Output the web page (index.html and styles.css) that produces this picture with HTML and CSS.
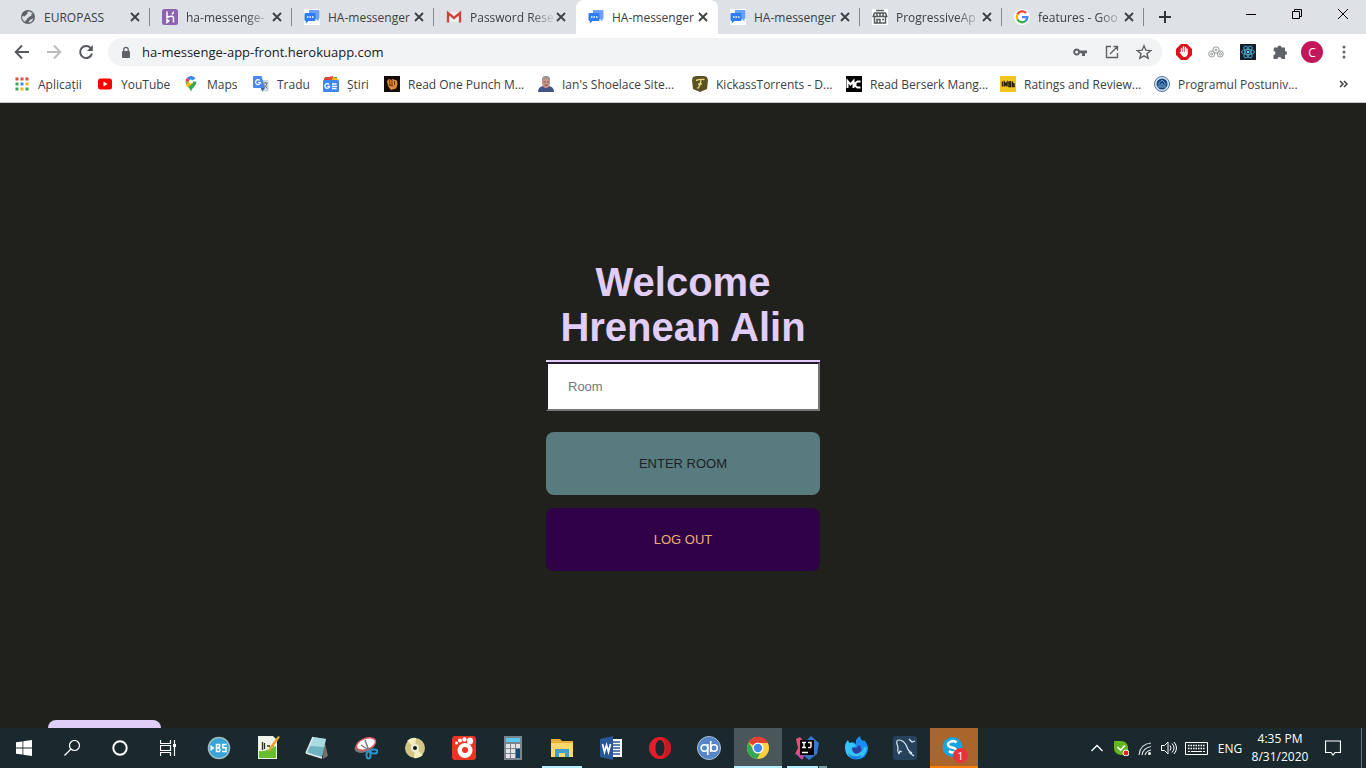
FILE: index.html
```html
<!DOCTYPE html>
<html lang="en">
<head>
<meta charset="utf-8">
<meta name="viewport" content="width=device-width, initial-scale=1">
<title>HA-messenger</title>
<link rel="stylesheet" href="styles.css">
</head>
<body>
<svg class="symbols" aria-hidden="true">
  <symbol id="close" viewBox="0 0 10 10"><path d="M1 1l8 8M9 1L1 9" stroke="#3c4043" stroke-width="1.8" fill="none"/></symbol>
  <symbol id="chat" viewBox="0 0 16 16"><path d="M5 1h9.500q1 0 1 1v7q0 1-1 1v2.500L12 10H5z" fill="#6ba1fb"/><path d="M1.500 4h9q1 0 1 1v6q0 1-1 1H4.500L1.800 14.500V12q-1.300 0-1.300-1V5q0-1 1-1z" fill="#2f7df6"/><path d="M3 8h1.500M5.500 8H7M8 8h1.500" stroke="#fff" stroke-width="1.400"/></symbol>
</svg>

<header class="browser">
  <nav class="tabs" aria-label="Tabs">
    <div class="tab">
      <svg class="icon" viewBox="0 0 16 16"><circle cx="8" cy="8" r="7" fill="#5f6368"/><path d="M8.500 2.500C7 3 8 5 6.500 5.500S6 7 4.500 7.500L2.300 7c-.5 2 .5 4.500 2.700 5.800.2-1.800 2-1.300 2.200-3C7.500 8.500 9 9 9.500 7.500l2-.8-.5-1.500 1.800-.2c-1-1.600-2.500-2.500-4.300-2.500z" fill="#dee1e6"/><path d="M8.500 13.500c0-2 1.500-1.500 2-3l2.800-1c-.5 2-2 4-4.800 4z" fill="#dee1e6"/></svg>
      <span class="tab-title">EUROPASS</span><button class="tab-close" aria-label="Close"><svg><use href="#close"/></svg></button>
    </div>
    <div class="tab">
      <svg class="icon" viewBox="0 0 16 16"><rect width="16" height="16" rx="2.500" fill="#8d63b0"/><path d="M5 2.500V8.500q3-1.300 5-1.200 1.500.2 1.500 2v4.200M11.500 2.500q-.2 1.800-1.500 2.800M5 10.500v3l1.800-1.500z" stroke="#fff" stroke-width="1.500" fill="none"/></svg>
      <span class="tab-title fade">ha-messenge-</span><button class="tab-close" aria-label="Close"><svg><use href="#close"/></svg></button>
    </div>
    <div class="tab">
      <svg class="icon plate"><use href="#chat"/></svg>
      <span class="tab-title">HA-messenger</span><button class="tab-close" aria-label="Close"><svg><use href="#close"/></svg></button>
    </div>
    <div class="tab before-active">
      <svg class="icon" viewBox="0 0 16 16"><path d="M2 13V3h12v10z" fill="#eee"/><path d="M2 13.500V4l6 5 6-5v9.500" stroke="#d0453a" stroke-width="2.300" fill="none"/></svg>
      <span class="tab-title fade">Password Rese</span><button class="tab-close" aria-label="Close"><svg><use href="#close"/></svg></button>
    </div>
    <div class="tab active">
      <svg class="icon"><use href="#chat"/></svg>
      <span class="tab-title">HA-messenger</span><button class="tab-close" aria-label="Close"><svg><use href="#close"/></svg></button>
    </div>
    <div class="tab">
      <svg class="icon plate"><use href="#chat"/></svg>
      <span class="tab-title">HA-messenger</span><button class="tab-close" aria-label="Close"><svg><use href="#close"/></svg></button>
    </div>
    <div class="tab">
      <svg class="icon plate" viewBox="0 0 16 16"><path d="M4 1.500h8M2.500 4h11l1.300 3.500H1.200zM2.500 8v6h11V8M5 4v3.500M8 4v4M11 4v3.500M5 14v-3.500h3V14M10 10.500h2" stroke="#555a5e" stroke-width="1.500" fill="none"/></svg>
      <span class="tab-title fade">ProgressiveAp</span><button class="tab-close" aria-label="Close"><svg><use href="#close"/></svg></button>
    </div>
    <div class="tab">
      <svg class="icon plate round" viewBox="0 0 16 16"><g fill="none" stroke-width="2.300"><path d="M12 4A5.200 5.200 0 0 0 3.500 5.500" stroke="#ea4335"/><path d="M3.500 5.500a5.200 5.200 0 0 0 0 5" stroke="#fbbc05"/><path d="M3.500 10.500A5.200 5.200 0 0 0 11.500 12" stroke="#34a853"/><path d="M11.500 12q1.800-1.500 1.800-3.800H8" stroke="#4285f4"/></g></svg>
      <span class="tab-title fade">features - Goo</span><button class="tab-close" aria-label="Close"><svg><use href="#close"/></svg></button>
    </div>
    <button class="new-tab" aria-label="New tab"><svg viewBox="0 0 12 12"><path d="M6 0v12M0 6h12" stroke="#333639" stroke-width="2"/></svg></button>
    <div class="window-controls">
      <button aria-label="Minimize"><svg viewBox="0 0 12 12"><path d="M1 6.500h10" stroke="#000"/></svg></button>
      <button aria-label="Restore"><svg viewBox="0 0 12 12"><path d="M1.500 3.500h7v7h-7zM3.500 3.500v-2h7v7h-2" stroke="#000" fill="none"/></svg></button>
      <button aria-label="Close window"><svg viewBox="0 0 12 12"><path d="M1 1l10 10M11 1L1 11" stroke="#000"/></svg></button>
    </div>
  </nav>

  <div class="toolbar">
    <div class="nav-buttons">
      <button aria-label="Back"><svg viewBox="0 0 16 16"><path d="M15 8H2M8 1.500L1.700 8 8 14.500" stroke="#55595e" stroke-width="1.900" fill="none"/></svg></button>
      <button aria-label="Forward"><svg viewBox="0 0 16 16"><path d="M1 8h13M8 1.500L14.300 8 8 14.500" stroke="#babcbe" stroke-width="1.900" fill="none"/></svg></button>
      <button aria-label="Reload"><svg viewBox="0 0 16 16"><path d="M13 4.500A6 6 0 1 0 14 9.500" stroke="#55595e" stroke-width="2" fill="none"/><path d="M14.800 1v6H9z" fill="#55595e"/></svg></button>
    </div>
    <div class="omnibox">
      <svg class="lock" viewBox="0 0 10 13"><rect x="1" y="5" width="8" height="7" rx="1" fill="#5f6368"/><path d="M2.800 6V3.500a2.200 2.200 0 0 1 4.400 0V6" stroke="#5f6368" stroke-width="1.300" fill="none"/></svg>
      <input class="address" type="text" aria-label="Address" value="ha-messenge-app-front.herokuapp.com">
      <div class="omnibox-actions">
        <svg viewBox="0 0 16 16"><path d="M4.700 4.500a3.500 3.500 0 1 0 3.300 4.800h2V12h3V9.300h2V6.500H8a3.500 3.500 0 0 0-3.300-2zm0 2a1.500 1.500 0 1 1 0 3 1.500 1.500 0 0 1 0-3z" fill="#5f6368"/></svg>
        <svg viewBox="0 0 16 16"><path d="M7 2.500H2.500v11h11V9M9.500 2.500h4v4M13.500 2.500l-7.500 7.500" stroke="#5f6368" stroke-width="1.400" fill="none"/></svg>
        <svg viewBox="0 0 16 16"><path d="M8 1.800l1.900 4.400 4.800.4L11 9.700l1.200 4.700L8 11.900l-4.200 2.500L5 9.700 1.300 6.600l4.800-.4z" stroke="#5f6368" stroke-width="1.400" fill="none"/></svg>
      </div>
    </div>
    <div class="extensions">
      <svg viewBox="0 0 16 16"><path d="M5 0h6l5 5v6l-5 5H5l-5-5V5z" fill="#d9141c"/><path d="M5.500 9V4.500M7.500 8V3M9.500 8V3.500M11 9V5" stroke="#fff" stroke-width="1.400" stroke-linecap="round"/><path d="M5 8h6.700v2q-.5 3-3 3-1.700 0-2.700-1.500L3.500 8.300q.5-1 1.500 0z" fill="#fff"/></svg>
      <svg viewBox="0 0 16 16"><g stroke="#999c9f" fill="none"><circle cx="8" cy="6" r="3.200"/><circle cx="3.700" cy="10" r="3"/><circle cx="12.300" cy="10" r="3"/><circle cx="8" cy="6" r="1"/><circle cx="12.300" cy="10" r="1.200"/><circle cx="3.700" cy="10" r="1"/></g></svg>
      <svg viewBox="0 0 16 16"><path d="M0 0h16v16H0z" fill="#17212d"/><g fill="none" stroke="#4aa6c4"><ellipse cx="8" cy="8" rx="6.500" ry="2.500"/><ellipse cx="8" cy="8" rx="6.500" ry="2.500" transform="rotate(60 8 8)"/><ellipse cx="8" cy="8" rx="6.500" ry="2.500" transform="rotate(120 8 8)"/></g><circle cx="8" cy="8" r="1.300" fill="#61dafb"/></svg>
      <svg viewBox="0 0 16 16"><path d="M2 3.500h3.500a2 2 0 1 1 4 0H13V7a2 2 0 1 1 0 4v4H9.500a2 2 0 1 0-4 0H1.500v-4a2 2 0 1 0 0-4z" fill="#5f6368"/></svg>
    </div>
    <button class="profile" aria-label="Profile">C</button>
    <button class="menu" aria-label="Menu"><svg viewBox="0 0 4 14"><g fill="#5f6368"><circle cx="2" cy="2" r="1.500"/><circle cx="2" cy="7" r="1.500"/><circle cx="2" cy="12" r="1.500"/></g></svg></button>
  </div>

  <nav class="bookmarks" aria-label="Bookmarks">
    <a href="#"><svg class="icon" viewBox="0 0 16 16"><path d="M1.500 3H15" stroke="#df4a40" stroke-width="3" stroke-dasharray="3 2"/><path d="M1.500 8h3M11.500 13h3" stroke="#34a853" stroke-width="3"/><path d="M6.500 8h3" stroke="#4285f4" stroke-width="3"/><path d="M11.500 8h3M6.500 13h3" stroke="#f3b51b" stroke-width="3"/><path d="M1.500 13h3" stroke="#34a853" stroke-width="3"/></svg><span>Aplicații</span></a>
    <a href="#"><svg class="icon" viewBox="0 0 16 16"><rect x="1" y="2.500" width="14" height="11" rx="2.500" fill="#f00"/><path d="M6.500 5.500v5L10.500 8z" fill="#fff"/></svg><span>YouTube</span></a>
    <a href="#"><svg class="icon" viewBox="0 0 16 16"><path d="M8 16C7.500 12 2.500 10 2.500 5.500h11C13.500 10 8.500 12 8 16z" fill="#34a853"/><path d="M2.500 5.500A5.500 5.500 0 0 1 4 1.800L8 5.500z" fill="#ea4335"/><path d="M4 1.800a5.500 5.500 0 0 1 8.500.5L8 6z" fill="#4285f4"/><path d="M3 8L7 4l3 3-5 4.500Q3.500 10 3 8z" fill="#fbbc05"/><circle cx="8" cy="5.500" r="2" fill="#fff"/></svg><span>Maps</span></a>
    <a href="#"><svg class="icon" viewBox="0 0 16 16"><path d="M6 4h9.500v11.500H9z" fill="#d5d8dc"/><path d="M1 0h7.500l3.500 12H1q-1 0-1-1V1q0-1 1-1z" fill="#4a88ec"/><path d="M8 12h4l-3 3.500z" fill="#2b5dbd"/><path d="M7 4.500A2.500 2.500 0 1 0 7.500 6.500H5" stroke="#fff" stroke-width="1.200" fill="none"/><path d="M10.500 7h4M12.500 6v1M14 7q-.5 3-3 5M11 8.500l3.500 4" stroke="#64798d" stroke-width="1" fill="none"/></svg><span>Tradu</span></a>
    <a href="#"><svg class="icon" viewBox="0 0 16 16"><path d="M2 1h12v4H2z" fill="#34a853"/><path d="M1 2l9-2 1 5H1z" fill="#ea4335"/><path d="M10 1l5.500 2-1 3H8z" fill="#fbbc05"/><rect y="4" width="16" height="12" rx="1" fill="#4285f4"/><path d="M6 8.500A2.300 2.300 0 1 0 6.500 10.300H4.500M9 8h4.500M9 10.300h5M9 12.500h4.500" stroke="#fff" stroke-width="1.300" fill="none"/></svg><span>Știri</span></a>
    <a href="#"><svg class="icon" viewBox="0 0 16 16"><path d="M0 0h16v16H0z" fill="#130b05"/><path d="M3 5l2-2 2 1 2-1 2 1 2 .5.5 4-1.500 4-5 1.500L4 10z" fill="#df8d31"/><path d="M5.500 4l.5 5M8 4v5M10.500 5v4M4.500 9l5 1" stroke="#6e3510"/></svg><span>Read One Punch M...</span></a>
    <a href="#"><svg class="icon" viewBox="0 0 16 16"><path d="M0 16q0-5 5-6h6q5 1 5 6z" fill="#465485"/><path d="M4 4q0-4 4-4t4 4v4q-1 4-4 4T4 8z" fill="#c99484"/><path d="M4 4q0-4 4-4t4 4Q8 1.500 4 4z" fill="#999"/><path d="M5.500 6h2M9 6h2M6.500 9h3" stroke="#71504d"/></svg><span>Ian's Shoelace Site...</span></a>
    <a href="#"><svg class="icon" viewBox="0 0 16 16"><path d="M1 1l3-1h8l3 1 1 3-1 9-7 3-7-3-1-9z" fill="#5c5122"/><path d="M4 4.500q3-1.500 8.500-1M9 4Q8 11 5.500 12.500M6 8h4" stroke="#e6d47e" stroke-width="1.500" fill="none"/></svg><span>KickassTorrents - D...</span></a>
    <a href="#"><svg class="icon" viewBox="0 0 16 16"><path d="M0 0h16v16H0z"/><path d="M1.500 12V5L4.500 8.500 7.500 5v7M14.500 5.500h-3L9.500 7v3l2 1.500h3" stroke="#fff" stroke-width="2" fill="none"/></svg><span>Read Berserk Mang...</span></a>
    <a href="#"><svg class="icon" viewBox="0 0 16 16"><path d="M0 0h16v16H0z" fill="#f0c51d"/><path d="M2.500 5.500v5M4.500 10.500v-4l1.200 2 1.300-2v4M9 6v4.500h1.500V6zM12.500 5.500v5H14V8h-1.500" stroke="#292308" stroke-width="1.500" fill="none"/></svg><span>Ratings and Review...</span></a>
    <a href="#"><svg class="icon" viewBox="0 0 16 16"><circle cx="8" cy="8" r="7.500" fill="#d8e5ed" stroke="#4777a6"/><circle cx="8" cy="8" r="5.500" fill="#164883"/><path d="M5 11V7l3-3 3 3v4M7 11V8h2v3M4 11h8" stroke="#6e9cc3" fill="none"/></svg><span>Programul Postuniv...</span></a>
    <button class="overflow" aria-label="More bookmarks"><svg viewBox="0 0 9 8"><path d="M1 1l3 3-3 3M5 1l3 3-3 3" stroke="#3c4043" stroke-width="1.500" fill="none"/></svg></button>
  </nav>
</header>

<main class="page">
  <form class="welcome">
    <h1>Welcome<br>Hrenean Alin</h1>
    <input class="room" type="text" placeholder="Room" aria-label="Room">
    <button class="action enter" type="button">ENTER ROOM</button>
    <button class="action logout" type="button">LOG OUT</button>
  </form>
  <div class="drawer-handle"></div>
</main>

<footer class="taskbar">
  <div class="system-buttons">
    <button aria-label="Start"><svg viewBox="0 0 16 16"><path d="M0 2.300l6.500-.9v6.200H0zM7.300 1.200L16 0v7.600H7.300zM0 8.400h6.500v6.200L0 13.700zM7.300 8.400H16V16l-8.700-1.200z" fill="#fff"/></svg></button>
    <button aria-label="Search"><svg viewBox="0 0 16 16"><circle cx="10.500" cy="5.500" r="5" stroke="#fff" stroke-width="1.200" fill="none"/><path d="M7 9L.5 15.500" stroke="#fff" stroke-width="1.300"/></svg></button>
    <button aria-label="Cortana"><svg viewBox="0 0 16 16"><circle cx="8" cy="8" r="6.700" stroke="#fff" stroke-width="2" fill="none"/></svg></button>
    <button aria-label="Task view"><svg viewBox="0 0 16 16"><path d="M.5 0v3.500h10V0M.5 16v-3.500h10V16M.5 5.500h10v5H.5zM14.500 0v16" stroke="#fff" stroke-width="1.200" fill="none"/><path d="M13 4h3v3h-3z" fill="#fff"/></svg></button>
  </div>
  <div class="apps">
    <button aria-label="BS Player"><svg viewBox="0 0 24 24"><circle cx="12" cy="12" r="10.500" fill="#36a6d7" stroke="#9dbcc6" stroke-width="1.500"/><path d="M3.500 9l4 3-4 3z" fill="#fff"/><path d="M9.500 8.500h3q1 1.700-1 3.200 2.500 1.500 1 3.800h-3zM9.500 12h3M19.500 8.500h-3.700v3.200H19v3.800h-4" stroke="#fff" stroke-width="1.500" fill="none"/></svg></button>
    <button aria-label="Notepad++"><svg viewBox="0 0 24 24"><path d="M2 0h15l4 4v19H2z" fill="#f0f3e7"/><path d="M3 15q8 1 17-5v12H3z" fill="#66be2e"/><path d="M6.500 6v8M8.500 7v6M11 10h3M15 10h3" stroke="#26331b" stroke-width="1.300"/><path d="M22 0l2 1-9 13-3 2 1-4z" fill="#e4a52c"/></svg></button>
    <button aria-label="Notepad"><svg viewBox="0 0 24 24"><path d="M19 3l4 17-5 3z" fill="#786f66"/><path d="M8 1l13 2-4 19L1 17z" fill="#6db3c2"/><path d="M8 1l13 2-2 8L4 10z" fill="#a9dbe1"/><path d="M8 1L1 17M1 17l16 5" stroke="#e4eeeb" stroke-width="1.500"/></svg></button>
    <button aria-label="Snipping Tool"><svg viewBox="0 0 24 24"><ellipse cx="11" cy="10" rx="11" ry="6" transform="rotate(-22 11 10)" fill="#77787b"/><ellipse cx="12" cy="8" rx="10" ry="5.500" transform="rotate(-20 12 8)" fill="#fff" stroke="#df5962" stroke-width="1.500"/><path d="M11 4l4 11M7 9l9 6" stroke="#797e83" stroke-width="1.500"/><g fill="none" stroke="#2894d0" stroke-width="2"><ellipse cx="14.500" cy="19" rx="2" ry="3.500"/><ellipse cx="20" cy="15.500" rx="3.500" ry="2"/></g></svg></button>
    <button aria-label="Disc"><svg viewBox="0 0 24 24"><circle cx="12" cy="12" r="10" fill="#d3c684"/><path d="M12 12L4 5q4-4 9-3zM12 12l8 7q-4 4-9 3z" fill="#f3edbf"/><circle cx="12" cy="12" r="4" fill="#f0f0dd"/><circle cx="12" cy="12" r="2" fill="#111a18"/></svg></button>
    <button aria-label="GOM Player"><svg viewBox="0 0 24 24"><rect width="24" height="24" rx="3" fill="#ed3421"/><g fill="#fff"><circle cx="13" cy="14.500" r="7.500"/><circle cx="4.500" cy="7" r="1.500"/><circle cx="8" cy="4.500" r="2"/><circle cx="12.500" cy="3.500" r="2.200"/><ellipse cx="18" cy="5" rx="3" ry="3.500"/></g><circle cx="13" cy="14" r="3" fill="#ed3421"/></svg></button>
    <button aria-label="Calculator"><svg viewBox="0 0 24 24"><path d="M3 0h18v24H3z" fill="#7a848d"/><path d="M5 2h14v4H5z" fill="#59c8f5"/><path d="M5 8h4v4H5zM10 8h4v4h-4zM15 8h4v4h-4zM5 13h4v4H5zM10 13h4v4h-4zM5 18h4v4H5zM10 18h4v4h-4z" fill="#e3e5e8"/><path d="M15 13h4v9h-4z" fill="#174978"/></svg></button>
    <button class="running" aria-label="File Explorer"><svg viewBox="0 0 24 24"><path d="M1 3h9l2 2h11v15H1z" fill="#e8ae35"/><path d="M1 7h22v14H1z" fill="#ffd869"/><path d="M5 21v-8h14v8h-4v-4H9v4z" fill="#439bd0"/></svg></button>
    <button aria-label="Word"><svg viewBox="0 0 24 24"><path d="M12 3h11v18H12z" fill="#fff"/><path d="M14 6h7M14 9h7M14 12h7M14 15h7M14 18h7" stroke="#295898" stroke-width="1.500"/><path d="M1 3l13-3v24L1 21z" fill="#295898"/><path d="M3.500 8l2 8 2-7 2 7 2-8" stroke="#fff" stroke-width="1.700" fill="none"/></svg></button>
    <button aria-label="Opera"><svg viewBox="0 0 24 24"><path fill-rule="evenodd" d="M12 1a11 11 0 1 0 0 22 11 11 0 0 0 0-22zm0 3c3 0 4.500 4 4.500 8S15 20 12 20s-4.500-4-4.500-8S9 4 12 4z" fill="#e51d29"/><path d="M15 2q8 2 8 10t-8 10q2.500-3 2.500-10T15 2z" fill="#c51a26"/></svg></button>
    <button aria-label="qBittorrent"><svg viewBox="0 0 24 24"><circle cx="12" cy="12" r="11.500" fill="#5686c7" stroke="#a9bfd8"/><g fill="none" stroke="#fff" stroke-width="1.600"><circle cx="7.500" cy="12" r="3.300"/><path d="M10.800 8v11M13.700 5v11"/><circle cx="17" cy="12" r="3.300"/></g></svg></button>
    <button class="focused" aria-label="Chrome"><svg viewBox="0 0 24 24"><circle cx="12" cy="12" r="11" fill="#ffcf40"/><path d="M12 12L2.500 6.500A11 11 0 0 1 22 7H12z" fill="#e34133"/><path d="M2.500 6.500A11 11 0 0 0 11 23l5-9-8 .5z" fill="#31a853"/><circle cx="12" cy="12" r="5.500" fill="#fff"/><circle cx="12" cy="12" r="4.200" fill="#4285f4"/></svg></button>
    <button class="running grouped" aria-label="IntelliJ IDEA"><svg viewBox="0 0 24 24"><path d="M1 3l4-2 6 7-6 11-5-1 3-6z" fill="#e94f78"/><path d="M12 4l4-4 8 7-2 11-8 6-6-5z" fill="#3977cb"/><path d="M1 18l6-3 2 6-2 3z" fill="#c44aa8"/><path d="M5 4h14v15H5z"/><path d="M7 6.500h4M9 6.500v5M7 11.500h4M13 6.500h3v4q0 1.500-3 1M7 16.500h6" stroke="#fff" stroke-width="1.400" fill="none"/></svg></button>
    <button aria-label="Firefox Developer Edition"><svg viewBox="0 0 24 24"><path d="M1 12q0-5 3-8l1 3 3-1q2 0 4 2V4q1-2 4-4 0 3 3 5l1-1q4 4 4 9-1 10-12 10.500Q2 23 1 12z" fill="#1b8df2"/><path d="M1 12q0-5 3-8l1 3 4 0q2 1 3 3l-4 2q0 5 5 5 6 0 7-6 4 2 3-1-1 12-11 12.500Q2 23 1 12z" fill="#35c5f4"/><path d="M4 17q5 6 14 2-2 4-8 4-4-1-6-6z" fill="#1976e0"/><path d="M8 11.500l4 .5 3-3q3 3 2 6-3 4-7 2-2-2-2-5.500z" fill="#2c3f9e"/></svg></button>
    <button aria-label="MySQL Workbench"><svg viewBox="0 0 24 24"><rect width="24" height="24" rx="3" fill="#25435c"/><path d="M6 18Q4 15 5 11 2 4 6 4q5 0 8 7 1 4 5 6l-2 0 4 3M6 18l1-3 2 1M16 3l3 3 3-1" stroke="#dce7ed" stroke-width="1.200" fill="none"/></svg></button>
    <button class="alert" aria-label="Skype, 1 notification"><svg viewBox="0 0 24 24"><circle cx="10.500" cy="11" r="10" fill="#16a5dc"/><path d="M14.500 6.500Q12 4 8 6t0 5l4 1q4 2 1 4-3 1.500-6-1" stroke="#fff" stroke-width="2.500" fill="none"/></svg><span class="badge">1</span></button>
  </div>
  <div class="tray">
    <svg class="tray-up" viewBox="0 0 12 8"><path d="M.5 7L6 1.500 11.500 7" stroke="#fff" stroke-width="1.300" fill="none"/></svg>
    <svg class="tray-icon" viewBox="0 0 16 16"><path d="M1 1h5q8-1 9 6v8H8Q1 14 1 8z" fill="#64b51e"/><path d="M4.500 7l3 3L12 5.500" stroke="#fff" stroke-width="1.600" fill="none"/><circle cx="13" cy="13" r="3" fill="#e52520" stroke="#fff"/></svg>
    <svg class="tray-icon" viewBox="0 0 16 16"><path d="M2 15Q3 4 14 3M5 15q1-7 9-8.500M8 15q1-4 6-5" stroke="#d8dfe0" stroke-width="1.200" fill="none"/><circle cx="12.500" cy="13.500" r="1.500" fill="#fff"/></svg>
    <svg class="tray-icon" viewBox="0 0 16 16"><path d="M.5 5.500h3L7 2v12l-3.500-3.500h-3zM9 5.500q2 2.500 0 5M11 3.500q4 4.500 0 9M13 2q5 6 0 12" stroke="#fff" fill="none"/></svg>
    <svg class="keyboard" viewBox="0 0 23 13"><path d="M.5.500h22v12H.5z" stroke="#fff" fill="none"/><path d="M3 3.500h17M3 6.500h17" stroke="#fff" stroke-width="1.500" stroke-dasharray="1.500 1"/><path d="M3 9.500h2M6 9.500h11M18 9.500h2" stroke="#fff"/></svg>
    <span class="language">ENG</span>
    <div class="clock"><span>4:35 PM</span><span>8/31/2020</span></div>
    <button class="notifications" aria-label="Notifications"><svg viewBox="0 0 16 16"><path d="M.5 1h15v11.500H10L8 15l-2-2.500H.5z" stroke="#fff" stroke-width="1.200" fill="none"/></svg></button>
  </div>
</footer>
</body>
</html>
```

FILE: styles.css
```css
* { box-sizing: border-box; }

body {
  margin: 0;
  min-height: 100vh;
  display: flex;
  flex-direction: column;
  font-family: "Open Sans", "Noto Sans", sans-serif;
  font-size: 12px;
  color: #3c4043;
  background: #20201c;
}

button {
  margin: 0;
  padding: 0;
  border: 0;
  background: none;
  font: inherit;
  color: inherit;
}

svg { display: block; flex: none; }
.symbols { display: none; }
.icon { width: 16px; height: 16px; }
.plate { background: #fff; }
.round { border-radius: 8px; }

/* Tab strip */
.browser { background: #fff; border-bottom: 1px solid #c9cacc; }

.tabs {
  display: flex;
  height: 34px;
  padding-left: 8px;
  background: #dee1e6;
}

.tab {
  display: flex;
  align-items: center;
  flex: 0 1 142px;
  min-width: 0;
  padding: 0 10px 0 12px;
  background: linear-gradient(#85888c, #85888c) right center / 1px 18px no-repeat;
}

.tab.before-active { background: none; }
.tab.active { background: #fff; border-radius: 8px 8px 0 0; }

.tab-title {
  flex: 1;
  margin-left: 8px;
  white-space: nowrap;
}

.fade { mask-image: linear-gradient(to right, #000 70%, transparent); }

.tab-close svg { width: 10px; height: 10px; }

.new-tab { width: 42px; display: grid; place-items: center; }
.new-tab svg { width: 12px; height: 12px; }

.window-controls { display: flex; margin-left: auto; height: 28px; }
.window-controls button { width: 46px; display: grid; place-items: center; }
.window-controls svg { width: 12px; height: 12px; }

/* Toolbar */
.toolbar {
  display: flex;
  align-items: center;
  height: 36px;
  padding-right: 20px;
}

.nav-buttons { display: flex; gap: 16px; padding: 0 14px; }
.nav-buttons svg { width: 16px; height: 16px; }

.omnibox {
  display: flex;
  align-items: center;
  flex: 1;
  height: 28px;
  padding: 0 10px 0 13px;
  border-radius: 14px;
  background: #f1f3f4;
}

.lock { width: 10px; height: 13px; }

.address {
  flex: 1;
  min-width: 0;
  padding: 0 11px;
  border: 0;
  outline: 0;
  background: none;
  color: #202124;
  font-family: inherit;
  font-size: 13px;
}

.omnibox-actions { display: flex; gap: 16px; }
.omnibox-actions svg { width: 16px; height: 16px; }

.extensions { display: flex; gap: 16px; padding: 0 13px 0 14px; }
.extensions svg { width: 16px; height: 16px; }

.profile {
  width: 22px;
  height: 22px;
  border-radius: 11px;
  background: #c2185b;
  color: #fff;
}

.menu { margin-left: 19px; }
.menu svg { width: 4px; height: 14px; }

/* Bookmarks */
.bookmarks {
  display: grid;
  grid-template-columns: 83px 86px 70px 70px 61px repeat(6, 154px) 1fr;
  align-items: center;
  height: 32px;
  padding: 0 18px 4px 14px;
}

.bookmarks a {
  display: flex;
  align-items: center;
  gap: 8px;
  color: inherit;
  text-decoration: none;
  white-space: nowrap;
}

.overflow { justify-self: end; }
.overflow svg { width: 9px; height: 8px; }

/* Page */
.page {
  position: relative;
  display: flex;
  flex: 1;
  align-items: center;
  justify-content: center;
}

.welcome {
  display: flex;
  flex-direction: column;
  width: 20%;
  min-width: 274px;
}

.welcome h1 {
  margin: 0;
  padding-bottom: 10px;
  border-bottom: 2px solid #e0cdf8;
  color: #e0cdf8;
  font: bold 40px/45px "Liberation Sans", Arial, sans-serif;
  text-align: center;
}

.room {
  height: 49px;
  margin-bottom: 21px;
  padding: 0 20px;
  border: 2px solid;
  border-color: #241c30 #767676 #767676 #241c30;
  border-radius: 0;
  background: #fff;
  font: 13px "Liberation Sans", Arial, sans-serif;
}

.room::placeholder { color: #757575; }

.action {
  height: 63px;
  border-radius: 8px;
  font: 13px "Liberation Sans", Arial, sans-serif;
}

.enter { margin-bottom: 13px; background: #587b7f; color: #1c2226; }
.logout { background: #2f0147; color: #edaf79; }

.drawer-handle {
  position: absolute;
  bottom: 0;
  left: 48px;
  width: 113px;
  height: 8px;
  border-radius: 8px 8px 0 0;
  background: #e0cdf8;
}

/* Taskbar */
.taskbar {
  display: flex;
  height: 40px;
  background: #1a292d;
  color: #fff;
}

.system-buttons { display: flex; margin-right: 3px; }
.system-buttons button { width: 48px; display: grid; place-items: center; }
.system-buttons svg { width: 16px; height: 16px; }

.apps { display: flex; gap: 1px; }

.apps button {
  position: relative;
  width: 48px;
  display: grid;
  place-items: center;
}

.apps svg { width: 24px; height: 24px; }
.apps .running { background: linear-gradient(#b3ecfb, #b3ecfb) center bottom / 40px 2px no-repeat; }
.apps .grouped { background-image: linear-gradient(to right, #b3ecfb 31px, #1a292d 31px 32px, #7b9fa6 32px); }
.apps .focused { background: #49565a; box-shadow: inset 0 -2px #b3ecfb; }
.apps .alert { background: #a9652c; box-shadow: inset 0 -2px #ff7b09; }

.badge {
  position: absolute;
  right: 10px;
  bottom: 5px;
  width: 15px;
  height: 15px;
  border-radius: 8px;
  background: #e8333b;
  font-size: 11px;
  line-height: 15px;
  text-align: center;
}

.tray { display: flex; align-items: center; margin-left: auto; }
.tray-up { width: 12px; height: 8px; margin-right: 10px; }
.tray-icon { width: 16px; height: 16px; margin-right: 8px; }
.keyboard { width: 23px; height: 13px; }
.language { width: 44px; text-align: center; }

.clock {
  display: flex;
  flex-direction: column;
  width: 56px;
  align-items: center;
  line-height: 18px;
  white-space: nowrap;
}

.notifications {
  align-self: stretch;
  display: grid;
  place-items: center;
  width: 54px;
  padding-right: 4px;
  margin-right: 4px;
  border-right: 1px solid #6a7679;
}

.notifications svg { width: 16px; height: 16px; }
```
